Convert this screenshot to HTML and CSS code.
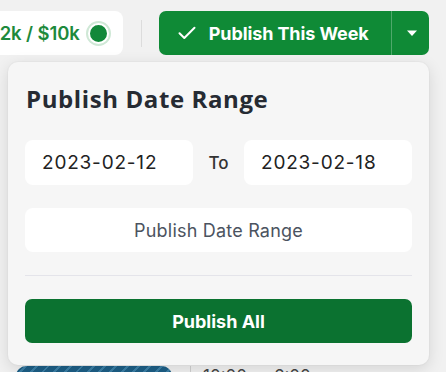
FILE: index.html
```html
<!DOCTYPE html>
<html>
<head>
<meta charset="utf-8">
<link rel="stylesheet" href="styles.css">
</head>
<body>
<div class="page">
  <header class="topbar">
    <div class="budget">
      <span class="budget-text">2k / $10k</span>
      <span class="dot"></span>
    </div>
    <span class="vdivider"></span>
    <div class="split">
      <button class="split-main">
        <svg class="check" width="18" height="14" viewBox="0 0 18 14"><path d="M1.5 7.2 L6.3 12 L16.5 1.8" fill="none" stroke="#fff" stroke-width="2" stroke-linecap="round" stroke-linejoin="round"/></svg>
        <span>Publish This Week</span>
      </button>
      <button class="split-caret">
        <svg width="12" height="8" viewBox="0 0 12 8"><path d="M1 1.5 L11 1.5 L6 7 Z" fill="#fff"/></svg>
      </button>
    </div>
  </header>
  <section class="schedule">
    <div class="shift-row">
      <div class="shift-pill"></div>
      <span class="row-line"></span>
      <span class="shift-time">10:00a - 6:00p</span>
    </div>
  </section>
  <div class="dropdown">
    <h2 class="dd-title">Publish Date Range</h2>
    <div class="range">
      <div class="date-input">2023-02-12</div>
      <span class="to">To</span>
      <div class="date-input">2023-02-18</div>
    </div>
    <button class="btn-range">Publish Date Range</button>
    <hr class="sep">
    <button class="btn-all">Publish All</button>
  </div>
</div>
</body>
</html>
```

FILE: styles.css
```css
* { box-sizing: border-box; }
html, body { margin: 0; padding: 0; }
body {
  background: #f1f1f1;
  font-family: Inter, "Liberation Sans", sans-serif;
  width: 446px;
  height: 372px;
  overflow: hidden;
}
.page { position: relative; width: 446px; height: 372px; }

.topbar {
  display: flex;
  align-items: center;
  height: 66px;
  padding: 11px 17px 11px 0;
}
.budget {
  display: flex;
  align-items: center;
  gap: 8px;
  height: 44px;
  width: 123px;
  background: #fff;
  border-radius: 0 8px 8px 0;
  justify-content: flex-end;
  padding-right: 14px;
  overflow: hidden;
}
.budget-text {
  color: #1d8a3c;
  font-weight: 600;
  font-size: 18.5px;
  white-space: nowrap;
  letter-spacing: -0.1px;
}
.dot {
  width: 21px; height: 21px;
  border-radius: 50%;
  background: #12883a;
  box-shadow: 0 0 0 2px #cfe8d6;
  border: 2px solid #fff;
  flex: none;
}
.vdivider {
  width: 1px;
  height: 27px;
  background: #dcdcdc;
  margin: 0 17px 0 18px;
}
.split {
  display: flex;
  height: 44px;
  width: 271px;
  border-radius: 7px;
  background: #0f8a36;
  overflow: hidden;
}
.split-main {
  flex: 1;
  border: 0;
  background: transparent;
  color: #fff;
  font-family: Inter, "Liberation Sans", sans-serif;
  font-weight: 700;
  font-size: 18px;
  display: flex;
  align-items: center;
  padding: 0 0 0 19px;
  gap: 13px;
  border-right: 1px solid #4fa86b;
  letter-spacing: -0.1px;
}
.split-caret {
  width: 37px;
  border: 0;
  background: transparent;
  display: flex;
  align-items: center;
  justify-content: center;
  padding: 0 0 0 2px;
}

.schedule { padding-top: 300px; }
.shift-row { display: flex; align-items: flex-start; height: 20px; }
.shift-pill {
  margin-left: 16px;
  width: 156px;
  height: 20px;
  border-radius: 10px;
  background: repeating-linear-gradient(135deg, #1d5f86 0 6px, #3b7fa6 6px 8px);
}
.row-line { width: 1px; height: 20px; background: #d0d0d0; margin-left: 18px; }
.shift-time { margin-left: 12px; font-size: 17px; color: #444; line-height: 14px; padding-top: 3px; }

.dropdown {
  position: absolute;
  top: 62px;
  left: 8px;
  width: 421px;
  height: 303px;
  background: #f6f6f6;
  border-radius: 10px;
  box-shadow: 0 4px 16px rgba(0,0,0,0.12), 0 0 0 1px rgba(0,0,0,0.02);
  padding: 22px 17px 0 17px;
}
.dd-title {
  margin: 0 0 0 1px;
  font-family: "Open Sans", Inter, sans-serif;
  font-weight: 700;
  font-size: 24px;
  line-height: 30px;
  color: #262b33;
  letter-spacing: 0.6px;
}
.range {
  display: flex;
  align-items: center;
  margin-top: 26px;
}
.date-input {
  width: 168px;
  height: 45px;
  background: #fff;
  border-radius: 8px;
  font-size: 19px;
  letter-spacing: 0.8px;
  color: #222;
  display: flex;
  align-items: center;
  padding-left: 17px;
}
.to {
  width: 51px;
  text-align: center;
  font-size: 17px;
  color: #333;
  font-weight: 500;
}
.btn-range {
  display: block;
  margin-top: 23px;
  width: 387px;
  height: 44px;
  border: 0;
  background: #fff;
  border-radius: 8px;
  font-family: Inter, "Liberation Sans", sans-serif;
  font-size: 18px;
  letter-spacing: 0.2px;
  color: #4b5360;
}
.sep {
  margin: 23px 0 0 0;
  border: 0;
  height: 1px;
  background: #e4e4ea;
}
.btn-all {
  display: block;
  margin-top: 23px;
  width: 387px;
  height: 44px;
  border: 0;
  background: #0b7230;
  border-radius: 7px;
  font-family: Inter, "Liberation Sans", sans-serif;
  font-weight: 700;
  font-size: 18px;
  color: #fff;
}
```
